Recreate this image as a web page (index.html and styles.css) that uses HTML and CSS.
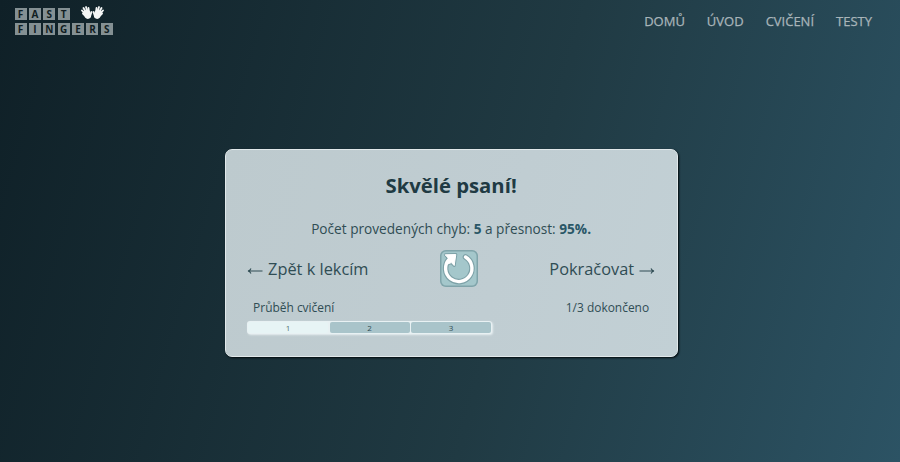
FILE: index.html
```html
<!DOCTYPE html>
<html lang="cs">
<head>
<meta charset="utf-8">
<title>Fast Fingers</title>
<link rel="stylesheet" href="styles.css">
</head>
<body>
<header class="header">
  <a class="logo">
    <span class="keys"><b>F</b><b>A</b><b>S</b><b>T</b></span>
    <span class="keys"><b>F</b><b>I</b><b>N</b><b>G</b><b>E</b><b>R</b><b>S</b></span>
    <svg class="hands" viewBox="0 0 46 27">
      <g id="hand" fill="#f4f6f6" stroke="#f4f6f6" stroke-linecap="round">
        <path stroke="none" d="M4 10 L15 7 L19 12 L20 22 Q14 29 8 23 Z"/>
        <path stroke-width="3.6" fill="none" d="M8 16 L2 9 M10 13 L5 4 M13 12 L10 2 M16 13 L15 4 M18 21 L21 12 M9 20 L4 15"/>
      </g>
      <use href="#hand" transform="translate(46 0) scale(-1 1)"/>
    </svg>
  </a>
  <nav class="nav"><a>DOMŮ</a><a>ÚVOD</a><a>CVIČENÍ</a><a>TESTY</a></nav>
</header>
<main class="card">
  <h1>Skvělé psaní!</h1>
  <p class="result">Počet provedených chyb: <strong>5</strong> a přesnost: <strong>95%.</strong></p>
  <div class="actions">
    <a><svg class="arrow" viewBox="0 0 16 10"><path d="M15.5 5H1M4 2.5Q3 4.6 1 5Q3 5.4 4 7.5"/></svg>Zpět k lekcím</a>
    <button class="retry" aria-label="Znovu">
      <svg viewBox="0 0 38 37">
        <g class="outline"><path d="M25.5 7A13.2 13.2 0 1 1 9 9.5"/><path class="tip" d="M5.5 4.8L15.8 4.5L14.2 15.5L11.4 12.6L7.5 14L9 9.3Z"/></g>
        <g class="stroke"><path d="M25.5 7A13.2 13.2 0 1 1 9 9.5"/><path class="tip" d="M5.5 4.8L15.8 4.5L14.2 15.5L11.4 12.6L7.5 14L9 9.3Z"/></g>
      </svg>
    </button>
    <a>Pokračovat<svg class="arrow" viewBox="0 0 16 10"><path d="M.5 5H15M12 2.5Q13 4.6 15 5Q13 5.4 12 7.5"/></svg></a>
  </div>
  <div class="status"><span>Průběh cvičení</span><span>1/3 dokončeno</span></div>
  <div class="progress"><span class="done">1</span><span>2</span><span>3</span></div>
</main>
</body>
</html>
```
FILE: styles.css
```css
* { box-sizing: border-box; }
body {
  margin: 0;
  height: 462px;
  overflow: hidden;
  font-family: "Open Sans", sans-serif;
  color: #304d54;
  background: linear-gradient(106deg, #0f2027, #203a43 57%, #2c5364);
}
.header {
  height: 44px;
  display: flex;
  justify-content: space-between;
  padding: 8px 28px 0 14.5px;
}
.logo { position: relative; }
.keys { display: flex; gap: 2.4px; height: 12px; margin-bottom: 2.7px; }
.keys b {
  width: 12px;
  height: 12px;
  background: #849093;
  color: #101d22;
  font-size: 10px;
  font-weight: 700;
  line-height: 12px;
  text-align: center;
}
.hands { position: absolute; left: 66.5px; top: -2.5px; width: 23px; height: 13.5px; }
.nav { display: flex; gap: 22px; font-size: 13px; font-weight: 500; line-height: 26px; color: #a8b4b9; -webkit-text-stroke: .25px #a8b4b9; }
.card {
  width: 453px;
  height: 208px;
  margin: 104.5px auto 0 224.6px;
  padding: 21.5px 21.5px 0;
  border: 1px solid #e1e8ea;
  border-radius: 7px;
  background: linear-gradient(106deg, #bdcace, #c0cdd2 60%, #c2d0d5);
  box-shadow: 1px 1px 2px #030b0e;
}
h1 { margin: 0; font-size: 20.3px; line-height: 28px; font-weight: 700; text-align: center; color: #203a43; }
.result { margin: 18px 0 0; font-size: 13.65px; line-height: 24px; text-align: center; }
.result strong { color: #2a5767; }
.actions {
  height: 38px;
  margin-top: 9px;
  display: flex;
  justify-content: space-between;
  align-items: center;
  font-size: 16.35px;
}
.actions a { display: flex; align-items: center; gap: 5px; line-height: 24px; }
.arrow { width: 16px; height: 10px; margin-top: 3px; fill: none; stroke: #304d54; stroke-width: 1.1; }
.retry {
  width: 38px;
  height: 37px;
  margin-top: -1px;
  padding: 0;
  border: 0;
  border-radius: 6px;
  background: #a4c7cb;
  box-shadow: inset 0 0 0 1.5px #80a4aa;
}
.retry svg { display: block; fill: none; stroke-linecap: round; stroke-linejoin: round; }
.outline { stroke: #7da1a7; stroke-width: 5.6; }
.stroke { stroke: #fff; stroke-width: 3.4; }
.outline .tip { fill: #7da1a7; stroke-width: 3; }
.stroke .tip { fill: #fff; stroke-width: 1; }
.status { display: flex; justify-content: space-between; padding: 0 6px; margin-top: 11px; font-size: 11.95px; line-height: 18px; }
.progress {
  display: flex;
  gap: 1.5px;
  width: 245px;
  height: 13px;
  margin-top: 4px;
  padding: 1px;
  border-radius: 3px;
  background: #e8f1f3;
  box-shadow: 1px 1px 2px #e6eef0;
}
.progress span {
  flex: 1;
  border-radius: 2px;
  background: #a9c4ca;
  font-size: 8px;
  line-height: 12px;
  text-align: center;
}
.progress .done { background: #e7f4f5; color: #527472; }
```
